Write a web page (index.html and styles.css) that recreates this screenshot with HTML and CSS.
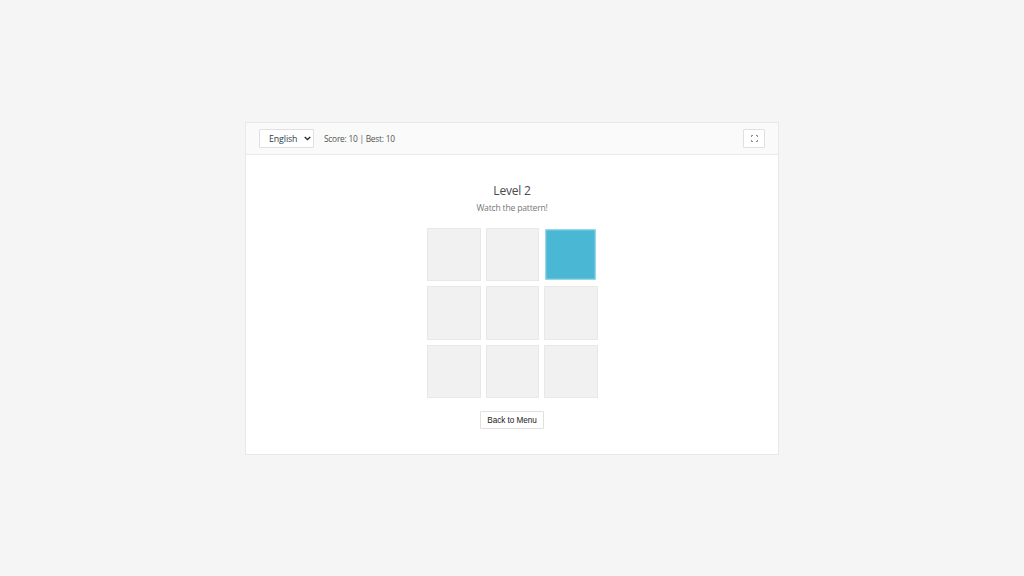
FILE: index.html
```html
<!DOCTYPE html>
<html lang="en">
<head>
<meta charset="utf-8">
<title>Memory Game</title>
<link rel="stylesheet" href="styles.css">
</head>
<body>
<main class="game">
  <header class="toolbar">
    <div class="toolbar-left">
      <select class="lang"><option>English</option></select>
      <span class="score">Score: 10 | Best: 10</span>
    </div>
    <button class="fullscreen" aria-label="Fullscreen">
      <svg width="7" height="7" viewBox="0 0 7 7" fill="none" stroke="#8a8a8a" stroke-width="1">
        <path d="M.5 2V.5H2M5 .5H6.500V2M6.500 5V6.500H5M2 6.500H.5V5"/>
      </svg>
    </button>
  </header>
  <section class="board">
    <h1 class="level">Level 2</h1>
    <p class="hint">Watch the pattern!</p>
    <div class="grid">
      <div class="tile"></div>
      <div class="tile"></div>
      <div class="tile active"></div>
      <div class="tile"></div>
      <div class="tile"></div>
      <div class="tile"></div>
      <div class="tile"></div>
      <div class="tile"></div>
      <div class="tile"></div>
    </div>
    <button class="back">Back to Menu</button>
  </section>
</main>
</body>
</html>
```
FILE: styles.css
```css
* { box-sizing: border-box; }
html, body { height: 100%; }
body {
  margin: 0;
  background: #f5f5f5;
  display: flex;
  align-items: center;
  justify-content: center;
  font-family: "Open Sans", "Noto Sans", sans-serif;
}
.game {
  width: 534px;
  height: 333px;
  background: #fff;
  border: 1px solid #e8e8e8;
  display: flex;
  flex-direction: column;
}
.toolbar {
  height: 32px;
  background: #fafafa;
  border-bottom: 1px solid #e8e8e8;
  display: flex;
  align-items: center;
  justify-content: space-between;
  padding: 0 13px;
}
.toolbar-left { display: flex; align-items: center; gap: 10px; }
.lang {
  appearance: none;
  width: 55px;
  height: 19px;
  font: 8.8px "Open Sans", sans-serif;
  letter-spacing: -.1px;
  color: #2a3a4a;
  border: 1px solid #e0e0e0;
  border-radius: 1px;
  padding: 1px 0 0 9px;
  background: #fff url("data:image/svg+xml,%3Csvg xmlns='http://www.w3.org/2000/svg' width='7' height='5'%3E%3Cpath d='M.7 1l2.8 2.6L6.3 1' fill='none' stroke='%23333' stroke-width='1.5'/%3E%3C/svg%3E") no-repeat right 2px center;
}
.score { font-size: 8.4px; letter-spacing: -.25px; color: #555; }
.fullscreen {
  width: 22px;
  height: 19px;
  background: #fff;
  border: 1px solid #e0e0e0;
  border-radius: 1px;
  padding: 0;
  display: flex;
  align-items: center;
  justify-content: center;
}
.board {
  flex: 1;
  display: flex;
  flex-direction: column;
  align-items: center;
  padding-top: 27px;
}
.level { margin: 0; font-size: 12px; letter-spacing: -.2px; line-height: 18px; font-weight: 400; color: #4a4a4a; }
.hint { margin: 2.5px 0 0; font-size: 8.6px; letter-spacing: -.2px; line-height: 13px; color: #777; }
.grid {
  margin-top: 12.8px;
  margin-left: 1px;
  display: grid;
  grid-template-columns: repeat(3, 53.33px);
  grid-auto-rows: 53.33px;
  gap: 5.33px;
}
.tile { background: #f1f1f1; border: 1px solid #e8e8e8; }
.active { background: #4ab8d4; border-color: #a0dbe9; transform: scale(.95); }
.back {
  margin-top: 13px;
  width: 64px;
  height: 18px;
  padding: 0;
  background: #fff;
  border: 1px solid #e0e0e0;
  border-radius: 1px;
  font: 8.2px "Liberation Sans", Arial, sans-serif;
  letter-spacing: -.05px;
  color: #222;
}
```
